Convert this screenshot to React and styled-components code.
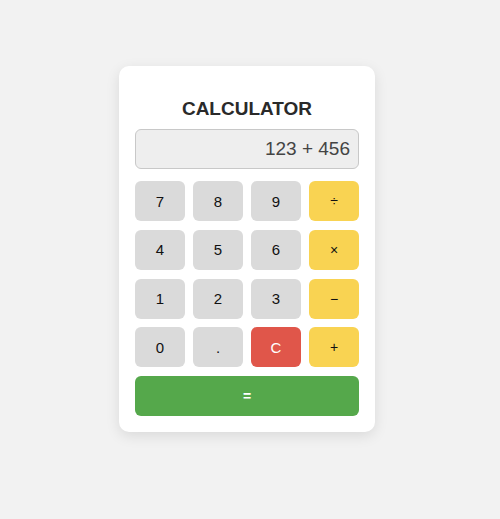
import React, { useState } from 'react';
import styled, { createGlobalStyle } from 'styled-components';

const GlobalStyle = createGlobalStyle`
    html, body {
        margin: 0;
        background: #f2f2f2;
        font-family: "Liberation Sans", Arial, sans-serif;
    }
`;

const Page = styled.div`
    display: flex;
    justify-content: center;
    align-items: flex-start;
    padding: 66px 6px 0 0;
    min-height: 519px;
    box-sizing: border-box;
`;

const Card = styled.div`
    width: 256px;
    box-sizing: border-box;
    padding: 31px 16px 16px;
    background: #fff;
    border-radius: 10px;
    box-shadow: 0 4px 14px rgba(0, 0, 0, 0.1);
`;

const Title = styled.h2`
    margin: 0 0 8px;
    text-align: center;
    font-size: 19px;
    line-height: 24px;
    font-weight: 700;
    color: #2a2a2a;
`;

const Display = styled.div`
    height: 40px;
    box-sizing: border-box;
    padding: 0 8px;
    display: flex;
    align-items: center;
    justify-content: flex-end;
    background: #eeeeee;
    border: 1px solid #c8c8c8;
    border-radius: 6px;
    font-size: 19px;
    color: #444;
    margin-bottom: 12px;
`;

const Keys = styled.div`
    display: grid;
    grid-template-columns: repeat(4, 50px);
    grid-auto-rows: 40px;
    column-gap: 8px;
    row-gap: 8.75px;
`;

const colors = {
    num: ['#dadada', '#111'],
    op: ['#f9d352', '#111'],
    clear: ['#e0564a', '#fff'],
    equals: ['#55a84b', '#fff'],
};

const Key = styled.button`
    border: none;
    border-radius: 6px;
    font-family: inherit;
    font-size: ${(p) => (p.$kind === 'num' || p.$kind === 'clear' ? '15px' : '14px')};
    font-weight: ${(p) => (p.$kind === 'equals' ? 700 : 400)};
    background: ${(p) => colors[p.$kind][0]};
    color: ${(p) => colors[p.$kind][1]};
    grid-column: ${(p) => (p.$wide ? '1 / -1' : 'auto')};
    cursor: pointer;
    padding: 0;
`;

const rows = [
    ['7', '8', '9', '÷'],
    ['4', '5', '6', '×'],
    ['1', '2', '3', '−'],
    ['0', '.', 'C', '+'],
];

function kindOf(k) {
    if (k === 'C') return 'clear';
    if ('÷×−+'.includes(k)) return 'op';
    return 'num';
}

export default function App() {
    const [value] = useState('123 + 456');

    return (
        <>
            <GlobalStyle />
            <Page>
                <Card>
                    <Title>CALCULATOR</Title>
                    <Display>{value}</Display>
                    <Keys>
                        {rows.flat().map((k) => (
                            <Key key={k} $kind={kindOf(k)}>{k}</Key>
                        ))}
                        <Key $kind="equals" $wide>=</Key>
                    </Keys>
                </Card>
            </Page>
        </>
    );
}
